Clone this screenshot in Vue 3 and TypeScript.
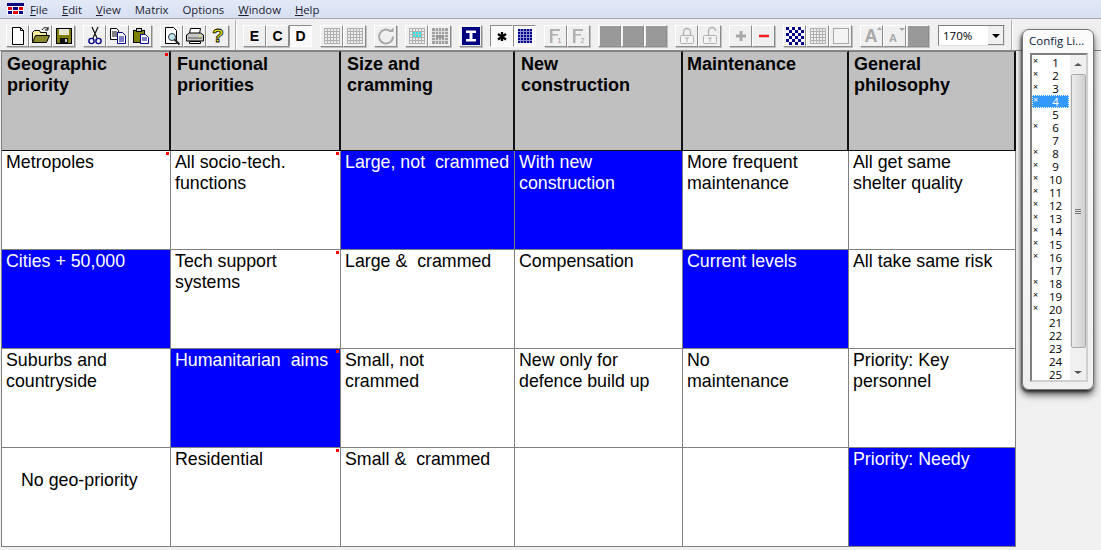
<script setup lang="ts">
interface Btn { icon?: string; label?: string; state?: string }
const G = (...names: string[]): Btn[] => names.map((icon) => ({ icon }))

const menus = [
  { pre: '', u: 'F', post: 'ile' },
  { pre: '', u: 'E', post: 'dit' },
  { pre: '', u: 'V', post: 'iew' },
  { pre: 'Matrix', u: '', post: '' },
  { pre: 'Options', u: '', post: '' },
  { pre: '', u: 'W', post: 'indow' },
  { pre: '', u: 'H', post: 'elp' },
]

const toolbarLeft: Btn[][] = [
  G('new', 'open', 'save'),
  G('cut', 'copy', 'paste'),
  G('preview', 'print', 'help'),
]
const toolbarRight: Btn[][] = [
  [{ label: 'E' }, { label: 'C' }, { label: 'D', state: 'on' }],
  G('gridA', 'gridA'),
  G('refresh'),
  G('gridB', 'gridC'),
  G('ibeam'),
  [{ icon: 'star', state: 'on' }, { icon: 'blue', state: 'on' }],
  G('f1', 'f2'),
  G('square', 'square', 'square'),
  G('lockA', 'lockB'),
  G('plus', 'minus'),
  G('checker', 'gridA', 'empty'),
  G('bigA', 'smallA', 'square'),
]

const gridLines = (c: string) => {
  let s = `<rect x="2.5" y="2.5" width="15" height="15" fill="#eee" stroke="${c}"/>`
  for (const v of [5.5, 8.5, 11.5, 14.5]) s += `<path d="M${v} 2.5V17.5M2.5 ${v}H17.5" stroke="${c}"/>`
  return s
}
const icons: Record<string, string> = {
  new: `<path d="M4.5 1.5h8l3 3v14h-11z" fill="#fff" stroke="#000"/><path d="M12.5 1.5v3h3" fill="none" stroke="#000"/>`,
  open: `<path d="M1.5 16.5v-10l2-2h5l1 2h6v3" fill="#f4ee9a" stroke="#000"/><path d="M1.5 16.5l3-7h14l-3 7z" fill="#8c8a2c" stroke="#000"/><path d="M11 4c2-3 4-3 6-1M17 1v3h-3" fill="none" stroke="#000"/>`,
  save: `<rect x="2.5" y="2.5" width="15" height="15" fill="#808000" stroke="#000"/><rect x="5" y="3" width="10" height="6" fill="#e8e8d0"/><rect x="6" y="12" width="8" height="5" fill="#111"/><rect x="11" y="13" width="2" height="3" fill="#ccc"/>`,
  cut: `<path d="M7 1l5 11M13 1L8 12" stroke="#111" stroke-width="1.2" fill="none"/><circle cx="6.5" cy="15" r="2.6" fill="none" stroke="#00008b" stroke-width="1.4"/><circle cx="13.5" cy="15" r="2.6" fill="none" stroke="#00008b" stroke-width="1.4"/>`,
  copy: `<path d="M2.5 2.5h6l2 2v9h-8z" fill="#fff" stroke="#000"/><path d="M4 6h5M4 8h5M4 10h5" stroke="#000"/><path d="M9.5 6.5h5l3 3v8h-8z" fill="#fff" stroke="#00008b"/><path d="M11 11h5M11 13h5M11 15h5" stroke="#00008b"/>`,
  paste: `<rect x="2.5" y="4.5" width="11" height="12" fill="#808000" stroke="#000"/><rect x="5.5" y="2.5" width="5" height="3" fill="#ccc" stroke="#000"/><path d="M9.5 8.5h5l3 3v6h-8z" fill="#fff" stroke="#00008b"/><path d="M11 12h5M11 14h5" stroke="#00008b"/>`,
  preview: `<path d="M3.5 1.5h8l3 3v13h-11z" fill="#fff" stroke="#000"/><circle cx="10" cy="11" r="3.5" fill="#bfe8ef" stroke="#334"/><path d="M12.5 13.5l5 5" stroke="#222" stroke-width="2"/>`,
  print: `<path d="M5.5 2.5h10l-1 5h-10z" fill="#fff" stroke="#000"/><path d="M1.5 9l3-2h11l3 2v6h-17z" fill="#c8c8c8" stroke="#000"/><path d="M3 12h14" stroke="#555"/><path d="M4.5 15.5h11v2h-11z" fill="#fff" stroke="#000"/><rect x="14" y="10" width="2" height="1" fill="#ff0"/>`,
  help: `<text x="10" y="16" text-anchor="middle" font-family="Liberation Sans" font-weight="700" font-size="19" fill="#e8e800" stroke="#000" stroke-width=".8">?</text>`,
  gridA: gridLines('#b0b0b0'),
  refresh: `<path d="M14.5 5.2a7 7 0 1 0 2.5 5.3" fill="none" stroke="#a8a8a8" stroke-width="2"/><path d="M12.5 6h5V1.5z" fill="#a8a8a8"/>`,
  gridB: gridLines('#b0b0b0') + `<rect x="6" y="6" width="8" height="5" fill="#2ee"/><path d="M8.500 6v5M11.500 6v5M6 8.500h8" stroke="#bbb"/>`,
  gridC: `<rect x="2" y="2" width="16" height="16" fill="#a0a0a0"/><path d="M5.500 2v16M8.500 2v16M11.500 2v16M14.500 2v16M2 5.500h16M2 8.500h16M2 11.500h16M2 14.500h16" stroke="#ddd"/><rect x="6" y="9" width="8" height="3" fill="#999"/>`,
  ibeam: `<rect x="1" y="1" width="18" height="18" fill="#000080"/><path d="M5 4.500h10v2.500h-3.500v6H15v2.500H5V13h3.500V7H5z" fill="#fff"/>`,
  star: `<path d="M10 6v9M6 8l8 5.500M14 8l-8 5.500" stroke="#000" stroke-width="2.300"/>`,
  blue: (() => {
    let s = `<rect x="3" y="3" width="14" height="14" fill="#00008b"/>`
    for (const v of [5.5, 8.5, 11.5, 14.5]) s += `<path d="M${v} 3V17M3 ${v}H17" stroke="#8f8fd0"/>`
    return s
  })(),
  f1: `<path d="M4 3h10v2H6.500v3H12v1.500H6.500V17H4z" fill="#b0b0b0"/><text x="11.500" y="17" font-family="Liberation Sans" font-size="7" fill="#999">1</text>`,
  f2: `<path d="M4 3h10v2H6.500v3H12v1.500H6.500V17H4z" fill="#b0b0b0"/><text x="11.500" y="17" font-family="Liberation Sans" font-size="7" fill="#999">2</text>`,
  square: `<rect x="0" y="0" width="20" height="20" fill="#999"/>`,
  lockA: `<path d="M6.500 9V6a3.500 3.500 0 0 1 7 0v3" fill="none" stroke="#b0b0b0" stroke-width="1.300"/><rect x="3.500" y="9.500" width="13" height="8" rx="1" fill="#f4f4f4" stroke="#b0b0b0"/><path d="M8 12h4M10 12v4" stroke="#b0b0b0"/>`,
  lockB: `<path d="M8.500 9V5a3.500 3.500 0 0 1 7 0" fill="none" stroke="#b0b0b0" stroke-width="1.300"/><rect x="3.500" y="9.500" width="13" height="8" rx="1" fill="#f4f4f4" stroke="#b0b0b0"/><path d="M8 12h4M10 12v4" stroke="#b0b0b0"/>`,
  plus: `<path d="M10 5v10M5 10h10" stroke="#a8a8a8" stroke-width="3"/>`,
  minus: `<path d="M5 10h10" stroke="#f02020" stroke-width="2.500"/>`,
  checker: (() => {
    let s = `<rect x="1" y="1" width="18" height="18" fill="#fff"/>`
    for (let y = 0; y < 6; y++) for (let x = 0; x < 6; x++) if ((x + y) % 2 === 0) s += `<rect x="${1 + x * 3}" y="${1 + y * 3}" width="3" height="3" fill="#00008b"/>`
    return s
  })(),
  empty: `<rect x="2.500" y="2.500" width="15" height="15" fill="#f4f4f4" stroke="#a8a8a8"/>`,
  bigA: `<text x="9" y="16" text-anchor="middle" font-family="Liberation Sans" font-weight="700" font-size="18" fill="#a8a8a8">A</text><path d="M15 4h5l-2.500-3z" fill="#a8a8a8"/>`,
  smallA: `<text x="8" y="16" text-anchor="middle" font-family="Liberation Sans" font-weight="700" font-size="11" fill="#a8a8a8">A</text><path d="M14 2h6l-3 3z" fill="#a8a8a8"/>`,
}

const headers = ['Geographic\npriority', 'Functional\npriorities', 'Size and\ncramming', 'New\nconstruction', 'Maintenance', 'General\nphilosophy']

interface Cell { text: string; on?: boolean; mark?: boolean; cls?: string }
const rows: Cell[][] = [
  [
    { text: 'Metropoles', mark: true },
    { text: 'All socio-tech.\nfunctions', mark: true },
    { text: 'Large, not  crammed', on: true },
    { text: 'With new\nconstruction', on: true },
    { text: 'More frequent\nmaintenance' },
    { text: 'All get same\nshelter quality' },
  ],
  [
    { text: 'Cities + 50,000', on: true },
    { text: 'Tech support\nsystems', mark: true },
    { text: 'Large &  crammed' },
    { text: 'Compensation' },
    { text: 'Current levels', on: true },
    { text: 'All take same risk' },
  ],
  [
    { text: 'Suburbs and\ncountryside' },
    { text: 'Humanitarian  aims', on: true, mark: true },
    { text: 'Small, not\ncrammed' },
    { text: 'New only for\ndefence build up' },
    { text: 'No\nmaintenance' },
    { text: 'Priority: Key\npersonnel' },
  ],
  [
    { text: 'No geo-priority', cls: 'inset' },
    { text: 'Residential', mark: true },
    { text: 'Small &  crammed' },
    { text: '' },
    { text: '' },
    { text: 'Priority: Needy', on: true },
  ],
]

const unmarked = [5, 7, 17, 21, 22, 23, 24, 25]
const configs = Array.from({ length: 25 }, (_, i) => ({ n: i + 1, x: !unmarked.includes(i + 1), sel: i === 3 }))
</script>

<template>
  <div class="app">
    <div class="menubar">
      <svg class="appicon" width="17" height="12" viewBox="0 0 17 12">
        <rect x="0" y="0" width="17" height="12" fill="#fff" />
        <rect x="0" y="0" width="17" height="3" fill="#000080" />
        <rect x="1" y="4" width="4" height="3" fill="#e00000" />
        <rect x="6" y="4" width="5" height="3" fill="#000080" />
        <rect x="12" y="4" width="4" height="3" fill="#e00000" />
        <rect x="1" y="8" width="4" height="3" fill="#000080" />
        <rect x="6" y="8" width="5" height="3" fill="#e00000" />
        <rect x="12" y="8" width="4" height="3" fill="#000080" />
      </svg>
      <span v-for="m in menus" :key="m.pre + m.u" class="menu">{{ m.pre }}<u v-if="m.u">{{ m.u }}</u>{{ m.post }}</span>
    </div>

    <div class="toolbar">
      <div v-for="(group, i) in toolbarLeft" :key="'l' + i" class="group">
        <button v-for="(b, j) in group" :key="j" class="btn">
          <svg width="20" height="20" viewBox="0 0 20 20" v-html="icons[b.icon as string]"></svg>
        </button>
      </div>
      <div class="sep"></div>
      <div v-for="(group, i) in toolbarRight" :key="'r' + i" class="group">
        <button v-for="(b, j) in group" :key="j" class="btn" :class="b.state">
          <span v-if="b.label" class="btnlabel">{{ b.label }}</span>
          <svg v-else width="20" height="20" viewBox="0 0 20 20" v-html="icons[b.icon as string]"></svg>
        </button>
      </div>
      <div class="combo">
        <span class="combotext">170%</span>
        <span class="comboarrow"><i></i></span>
      </div>
      <div class="sep last"></div>
    </div>

    <div class="matrix">
      <div v-for="(h, i) in headers" :key="h" class="head">
        {{ h }}
        <span v-if="i === 0" class="mark"></span>
      </div>
      <template v-for="(row, r) in rows" :key="r">
        <div v-for="(c, k) in row" :key="k" class="cell" :class="[{ on: c.on }, c.cls]">
          {{ c.text }}
          <span v-if="c.mark" class="mark"></span>
        </div>
      </template>
    </div>

    <aside class="popup">
      <div class="poptitle">Config Li...</div>
      <div class="listbox">
        <div class="items">
          <div v-for="c in configs" :key="c.n" class="item" :class="{ sel: c.sel }">
            <span class="x">{{ c.x ? '×' : '' }}</span>
            <span class="num">{{ c.n }}</span>
          </div>
        </div>
        <div class="scroll">
          <span class="arrow up"></span>
          <div class="thumb"><i></i><i></i><i></i></div>
          <span class="arrow down"></span>
        </div>
      </div>
    </aside>
  </div>
</template>

<style>
html, body { margin: 0; background: #f0f0f0; overflow: hidden; }
</style>

<style scoped>
.app {
  position: relative;
  width: 1101px;
  height: 550px;
  overflow: hidden;
  background: #f0f0f0;
  font-family: "Liberation Sans", Arial, sans-serif;
}
.menubar {
  height: 18px;
  display: flex;
  align-items: center;
  padding-left: 7px;
  box-sizing: border-box;
  background: linear-gradient(#e4e9f7, #d6dff2);
  font: 11.3px "Open Sans", sans-serif;
  color: #1c1c30;
}
.appicon { margin-right: 6px; }
.menu { margin-right: 14px; }
.toolbar {
  height: 33px;
  box-sizing: border-box;
  display: flex;
  align-items: flex-start;
  padding: 6px 0 0 6px;
  gap: 8px;
  background: #f0f0f0;
  border-top: 1px solid #a8a8a8;
  border-bottom: 1px solid #8a8a8a;
  position: relative;
}
.group { display: flex; }
.btn {
  width: 23px;
  height: 22px;
  padding: 0;
  background: #f0f0f0;
  border: 1px solid;
  border-color: #fff #8c8c8c #8c8c8c #fff;
  box-shadow: 1px 1px 0 #c0c0c0;
  display: flex;
  align-items: center;
  justify-content: center;
  box-sizing: border-box;
}
.btn.on {
  border-color: #8c8c8c #fff #fff #8c8c8c;
  box-shadow: none;
  background: #fafafa;
}
.btnlabel { font: 700 14px "Liberation Sans", sans-serif; color: #000; }
.sep {
  width: 2px;
  box-sizing: border-box;
  align-self: stretch;
  margin: -5px -2px 0 -2px;
  background: #b0b0b0;
  border-right: 1px solid #fff;
}
.combo {
  width: 67px;
  height: 21px;
  margin-left: 1px;
  box-sizing: border-box;
  background: #fff;
  border: 1px solid;
  border-color: #808080 #e0e0e0 #e0e0e0 #808080;
  display: flex;
  align-items: center;
  justify-content: space-between;
  font: 11.5px "Open Sans", sans-serif;
  color: #000;
}
.combotext { padding-left: 4px; }
.comboarrow {
  width: 16px;
  height: 19px;
  background: #f0f0f0;
  border-left: 1px solid #fff;
  box-shadow: inset -1px -1px 0 #888;
  display: flex;
  align-items: center;
  justify-content: center;
}
.comboarrow i {
  width: 0;
  height: 0;
  border-left: 4px solid transparent;
  border-right: 4px solid transparent;
  border-top: 4px solid #000;
}
.matrix {
  margin-left: 1px;
  width: 1015px;
  box-sizing: border-box;
  border-left: 1px solid #808080;
  display: grid;
  grid-template-columns: 169px 170px 174px 168px 166px 167px;
  grid-template-rows: 100px repeat(4, 99px);
  font-size: 17.8px;
  line-height: 21px;
  color: #000;
}
.head {
  position: relative;
  background: #c0c0c0;
  font-size: 18px;
  font-weight: 700;
  padding: 2px 0 0 5px;
  white-space: pre-wrap;
  box-sizing: border-box;
  border-top: 1px solid #808080;
  border-right: 2px solid #111;
  border-bottom: 1px solid #111;
}
.head:nth-child(2), .head:nth-child(3), .head:nth-child(4) { padding-left: 6px; }
.head:nth-child(5) { padding-left: 4px; }
.cell {
  position: relative;
  background: #fff;
  padding: 1px 0 0 4px;
  box-sizing: border-box;
  white-space: pre-wrap;
  border-right: 1px solid #808080;
  border-bottom: 1px solid #808080;
}
.cell.on { background: #0000ff; color: #fff; }
.cell.inset { padding: 22px 0 0 19px; }
.mark {
  position: absolute;
  top: 1px;
  right: 1px;
  width: 3px;
  height: 3px;
  background: #f00;
}
.popup {
  position: absolute;
  left: 1022px;
  top: 29px;
  width: 72px;
  height: 361px;
  box-sizing: border-box;
  border: 1px solid #777;
  border-radius: 7px;
  box-shadow: -1px 2px 3px rgba(0,0,0,.6), 0 5px 7px rgba(0,0,0,.6);
  background: linear-gradient(#fbfbfb, #f0f0f0);
  font-family: "Open Sans", sans-serif;
}
.poptitle {
  font-size: 11.5px;
  line-height: 16px;
  margin: 3px 0 0 6px;
  height: 20px;
  color: #0c1c3c;
  white-space: nowrap;
}
.listbox {
  margin: 0 0 0 7px;
  width: 58px;
  height: 329px;
  box-sizing: border-box;
  border: 2px solid;
  border-color: #808080 #d0d0d0 #d0d0d0 #808080;
  background: #fff;
  display: flex;
  overflow: hidden;
}
.items { width: 37px; padding-top: 1px; }
.item {
  height: 13px;
  line-height: 13px;
  font-size: 11.5px;
  position: relative;
  color: #000;
  text-align: center;
  padding-left: 10px;
  box-sizing: border-box;
}
.item.sel { background: #3399ff; color: #fff; outline: 1px dotted #fff; outline-offset: -1px; }
.x { position: absolute; left: 1px; top: -2px; font-size: 9px; }
.num { display: inline-block; }
.scroll {
  width: 16px;
  margin-left: 1px;
  background: #f0f0f0;
  display: flex;
  flex-direction: column;
  align-items: center;
}
.arrow { width: 0; height: 0; border-left: 4px solid transparent; border-right: 4px solid transparent; }
.arrow.up { border-bottom: 3px solid #555; margin: 8px 0 8px; }
.arrow.down { border-top: 3px solid #555; margin: auto 0 6px; }
.thumb {
  width: 15px;
  height: 274px;
  box-sizing: border-box;
  border: 1px solid #aaa;
  border-radius: 2px;
  background: linear-gradient(90deg, #ececec, #d0d0d0);
  display: flex;
  flex-direction: column;
  align-items: center;
  justify-content: center;
  gap: 1px;
}
.thumb i { width: 6px; height: 1px; background: #777; }
</style>
